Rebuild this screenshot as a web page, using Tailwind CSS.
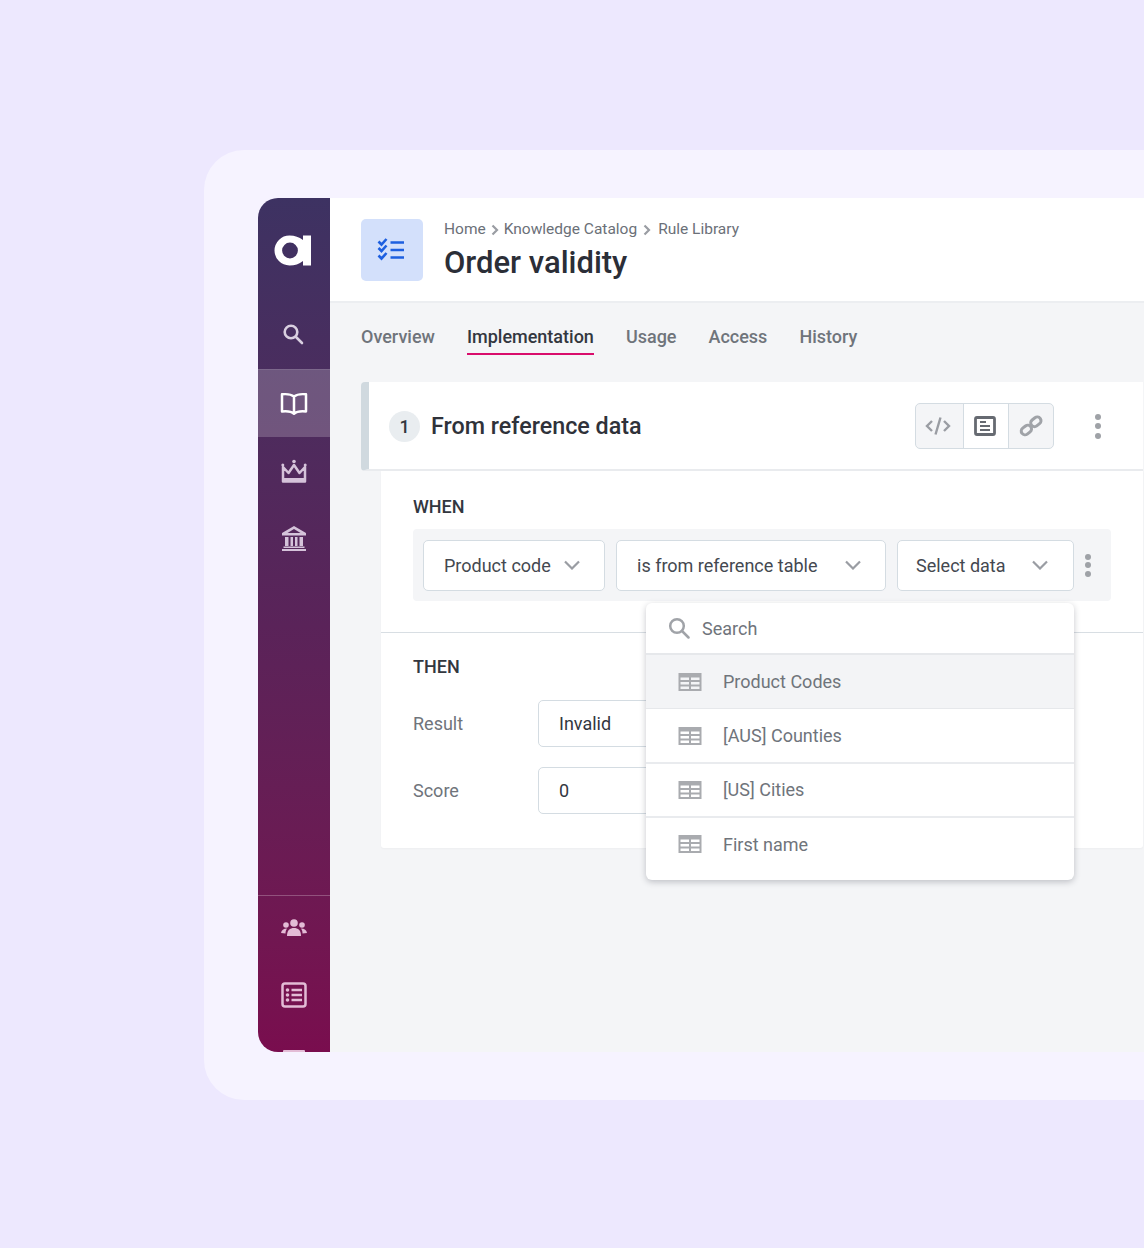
<!DOCTYPE html>
<html>
<head>
<meta charset="utf-8">
<script src="https://cdn.jsdelivr.net/npm/@tailwindcss/browser@4"></script>
</head>
<body class="bg-[#ede8fe] font-['Roboto',sans-serif]">
<div class="w-[1144px] h-[1248px] overflow-hidden pt-[150px] pl-[204px]">
  <div class="w-[940px] h-[950px] bg-[#f6f3ff] rounded-l-[40px] pt-[48px] pl-[54px]">
    <div class="flex w-[886px] h-[854px]">
      <!-- sidebar -->
      <div class="w-[72px] shrink-0 flex flex-col items-stretch rounded-l-[20px] overflow-hidden bg-gradient-to-b from-[#3d3262] via-[#5a2359] to-[#790d4e]">
        <div class="h-[103px] flex items-center justify-center pr-[3px]">
          <svg width="37" height="31" viewBox="0 0 37 31" class="mt-[1px]"><path fill="#fff" fill-rule="evenodd" d="M15.500 0.500C21 0.500 25 2 29 5V0.500H37V30.500H29V26C25 29 21 30.500 15.500 30.500A15 15 0 0 1 15.500 0.500ZM16 7.600A7.900 7.900 0 1 0 16 23.400A7.900 7.900 0 1 0 16 7.600Z"/></svg>
        </div>
        <div class="h-[68px] flex items-center justify-center pr-[2px] pb-[2px]">
          <svg width="22" height="22" viewBox="0 0 22 22" fill="none" stroke="#d9cfe0" stroke-width="2.600" stroke-linecap="round"><circle cx="9" cy="9" r="6.300"/><path d="M14 14l6 6"/></svg>
        </div>
        <div class="h-[68px] flex items-center justify-center bg-white/20 border-t border-white/10 pr-[1px]">
          <svg width="28" height="24" viewBox="0 0 28 24" fill="none" stroke="#fff" stroke-width="2.500" stroke-linejoin="round" stroke-linecap="round"><path d="M14 4.500C11.500 2.500 7 1.800 2 2.300V19.500C7 19 11.500 19.500 14 21.800C16.500 19.500 21 19 26 19.500V2.300C21 1.800 16.500 2.500 14 4.500ZM14 4.500V21"/></svg>
        </div>
        <div class="h-[68px] flex items-center justify-center pr-[1px]">
          <svg width="26" height="25" viewBox="0 0 26 25" fill="none" stroke="#d5c3da" stroke-width="2.500" stroke-linejoin="round"><path d="M2 8L7.500 14L13 6L18.500 14L24 8V22.500H2Z"/><path d="M2 20.500H24" stroke-width="3"/><circle cx="13" cy="2.500" r="1.800" fill="#d5c3da" stroke="none"/><circle cx="1.800" cy="6" r="1.500" fill="#d5c3da" stroke="none"/><circle cx="24.200" cy="6" r="1.500" fill="#d5c3da" stroke="none"/></svg>
        </div>
        <div class="h-[68px] flex items-center justify-center pr-[1px] pb-[2px]">
          <svg width="26" height="26" viewBox="0 0 26 26" fill="#d5c3da"><path fill-rule="evenodd" d="M13 1L25 8V10.500H1V8ZM13 4L6.500 8H19.500Z"/><path d="M4 12H7.500V21H4ZM9.500 12H12V21H9.500ZM14 12H16.500V21H14ZM18.500 12H22V21H18.500Z"/><path d="M2.500 21.500H23.500V23H2.500ZM1 24H25V26H1Z"/></svg>
        </div>
        <div class="flex-1"></div>
        <div class="h-[66px] flex items-center justify-center border-t border-white/25 pr-[1px] pb-[2px]">
          <svg width="26" height="18" viewBox="0 0 26 18" fill="#e3bcd6"><circle cx="13" cy="4" r="3.800"/><circle cx="5" cy="6" r="2.800"/><circle cx="21" cy="6" r="2.800"/><path d="M6 17C6 11 9 9 13 9C17 9 20 11 20 17Z"/><path d="M0 14C0.500 11 2.500 9.500 6 9.500C5 11 4.500 12.500 4.500 14.500Z"/><path d="M26 14C25.500 11 23.500 9.500 20 9.500C21 11 21.500 12.500 21.500 14.500Z"/></svg>
        </div>
        <div class="h-[68px] flex items-center justify-center shrink-0 pr-[1px]">
          <svg width="26" height="26" viewBox="0 0 26 26" fill="none" stroke="#e3bcd6" stroke-width="2.500"><rect x="1.500" y="1.500" width="23" height="23" rx="2.500"/><path d="M10.500 8H21M10.500 13H21M10.500 18H21"/><circle cx="6.500" cy="8" r="1.800" fill="#e3bcd6" stroke="none"/><circle cx="6.500" cy="13" r="1.800" fill="#e3bcd6" stroke="none"/><circle cx="6.500" cy="18" r="1.800" fill="#e3bcd6" stroke="none"/></svg>
        </div>
        <div class="h-[23px] flex justify-center items-end pr-[1px]">
          <div class="w-[22px] h-[2px] bg-[#e3bcd6] rounded-t-[1px]"></div>
        </div>
      </div>
      <!-- main -->
      <div class="flex-1 flex flex-col bg-[#f4f5f7] relative">
        <div class="h-[105px] bg-white border-b-2 border-[#eceef1] flex items-start pt-[21px] pl-[31px]">
          <div class="w-[62px] h-[62px] rounded-[5px] bg-[#d3e0fb] flex items-center justify-center pr-[2px]">
            <svg width="28" height="24" viewBox="0 0 28 24" fill="none" stroke="#1d5fe0" stroke-width="2.600"><path d="M1.500 3.500L4.500 6.500L9.500 1M1.500 10L4.500 13L9.500 7.500M1.500 17.500L4.500 20.500L9.500 15"/><path d="M13.500 4.500H27M13.500 12H27M13.500 19.500H27"/></svg>
          </div>
          <div class="ml-[21px] pt-[1px]">
            <div class="h-[20px] flex items-center text-[15.5px] text-[#6b7078]">
              <span>Home</span>
              <svg width="8" height="12" viewBox="0 0 8 12" class="mx-[5px]" fill="none" stroke="#9a9da3" stroke-width="2.200"><path d="M1.500 1.500L6 6L1.500 10.500"/></svg>
              <span>Knowledge Catalog</span>
              <svg width="8" height="12" viewBox="0 0 8 12" class="ml-[6px] mr-[7px]" fill="none" stroke="#9a9da3" stroke-width="2.200"><path d="M1.500 1.500L6 6L1.500 10.500"/></svg>
              <span>Rule Library</span>
            </div>
            <div class="text-[31px] leading-[40px] font-medium text-[#2b2e37] mt-[3px]">Order validity</div>
          </div>
        </div>
        <div class="h-[52px] mt-[5px] flex items-stretch gap-[32px] pl-[31px] text-[18px] font-medium text-[#6f747b]">
          <div class="flex items-center pt-[10px] h-[47px]">Overview</div>
          <div class="flex items-center pt-[12px] h-[47px] text-[#33373f] border-b-2 border-[#d90d6c]">Implementation</div>
          <div class="flex items-center pt-[10px] h-[47px]">Usage</div>
          <div class="flex items-center pt-[10px] h-[47px]">Access</div>
          <div class="flex items-center pt-[10px] h-[47px]">History</div>
        </div>
        <!-- card -->
        <div class="mt-[22px] ml-[31px] mr-[2px]">
          <div class="h-[89px] pt-[1px] bg-white border-l-[8px] border-[#d0d9df] rounded-l-[4px] border-b-2 border-b-[#e9ebee] flex items-center pl-[20px] pr-[42px]">
            <div class="w-[31px] h-[31px] rounded-full bg-[#e9edf0] flex items-center justify-center text-[18px] font-medium text-[#33373f]">1</div>
            <div class="ml-[11px] text-[23.3px] font-medium text-[#2f323a]">From reference data</div>
            <div class="flex-1"></div>
            <div class="flex h-[46px] w-[139px] border border-[#d4dce2] rounded-[5px] bg-[#f4f5f7] overflow-hidden mr-[41px]">
              <div class="w-[47px] flex items-center justify-center pr-[4px]">
                <svg width="26" height="20" viewBox="0 0 26 20" fill="none" stroke="#9a9da3" stroke-width="2.400"><path d="M7 5L2 10L7 15M19 5L24 10L19 15M15.500 1.500L10.500 18.500"/></svg>
              </div>
              <div class="w-[46px] bg-white border-x border-[#d4dce2] flex items-center justify-center pr-[2px]">
                <svg width="22" height="20" viewBox="0 0 22 20" fill="none" stroke="#666a71" stroke-width="2.800"><rect x="1.500" y="1.500" width="19" height="17" rx="1.500"/><path d="M6 6H12M6 10H16M6 14H16" stroke-width="2"/></svg>
              </div>
              <div class="flex-1 flex items-center justify-center">
                <svg width="24" height="24" viewBox="0 0 24 24" fill="none" stroke="#a0a3a8" stroke-width="3"><rect x="1.800" y="12.500" width="11" height="7.500" rx="3.700" transform="rotate(-38 7 16)"/><rect x="11.500" y="4" width="11" height="7.500" rx="3.700" transform="rotate(-38 17 8)"/></svg>
              </div>
            </div>
            <div class="flex flex-col gap-[3.500px] w-[6px]">
              <div class="w-[6px] h-[6px] rounded-full bg-[#9fa2a7]"></div>
              <div class="w-[6px] h-[6px] rounded-full bg-[#9fa2a7]"></div>
              <div class="w-[6px] h-[6px] rounded-full bg-[#9fa2a7]"></div>
            </div>
          </div>
          <div class="ml-[20px] h-[377px] bg-white rounded-b-[3px] shadow-[0_1px_2px_rgba(0,0,0,0.03)]">
            <div class="h-[162px] border-b border-[#d8dee3] px-[32px] pt-[25px]">
              <div class="text-[18px] leading-[22px] font-medium text-[#33373f]">WHEN</div>
              <div class="mt-[11px] w-[698px] h-[72px] bg-[#f4f5f7] rounded-[4px] flex items-center pl-[10px] text-[18px] text-[#444850]">
                <div class="w-[182px] h-[51px] bg-white border border-[#d4dce2] rounded-[5px] flex items-center justify-between pl-[20px] pr-[24px]">Product code
                  <svg width="16" height="10" viewBox="0 0 16 10" fill="none" stroke="#9a9da3" stroke-width="2.200"><path d="M1 1.500L8 8.500L15 1.500"/></svg>
                </div>
                <div class="w-[270px] h-[51px] ml-[11px] bg-white border border-[#d4dce2] rounded-[5px] flex items-center justify-between pl-[20px] pr-[24px]">is from reference table
                  <svg width="16" height="10" viewBox="0 0 16 10" fill="none" stroke="#9a9da3" stroke-width="2.200"><path d="M1 1.500L8 8.500L15 1.500"/></svg>
                </div>
                <div class="w-[177px] h-[51px] ml-[11px] bg-white border border-[#d4dce2] rounded-[5px] flex items-center justify-between pl-[18px] pr-[25px]">Select data
                  <svg width="16" height="10" viewBox="0 0 16 10" fill="none" stroke="#9a9da3" stroke-width="2.200"><path d="M1 1.500L8 8.500L15 1.500"/></svg>
                </div>
                <div class="ml-[11px] flex flex-col gap-[2.500px] w-[6px]">
                  <div class="w-[6px] h-[6px] rounded-full bg-[#9fa2a7]"></div>
                  <div class="w-[6px] h-[6px] rounded-full bg-[#9fa2a7]"></div>
                  <div class="w-[6px] h-[6px] rounded-full bg-[#9fa2a7]"></div>
                </div>
              </div>
            </div>
            <div class="px-[32px] pt-[23px] text-[18px]">
              <div class="leading-[22px] font-medium text-[#33373f]">THEN</div>
              <div class="mt-[22px] flex items-center text-[#6f747b]">
                <div class="w-[125px]">Result</div>
                <div class="w-[200px] h-[47px] bg-white border border-[#d4dce2] rounded-[5px] flex items-center pl-[20px] text-[#33373f]">Invalid</div>
              </div>
              <div class="mt-[20px] flex items-center text-[#6f747b]">
                <div class="w-[125px]">Score</div>
                <div class="w-[200px] h-[47px] bg-white border border-[#d4dce2] rounded-[5px] flex items-center pl-[20px] text-[#33373f]">0</div>
              </div>
            </div>
          </div>
        </div>
        <!-- dropdown -->
        <div class="absolute left-[316px] top-[405px] w-[428px] h-[277px] bg-white rounded-[6px] shadow-[0_2px_6px_rgba(30,35,50,0.25)] text-[18px] text-[#6f747b] overflow-hidden">
          <div class="h-[50px] flex items-center pl-[22px]">
            <svg width="22" height="22" viewBox="0 0 22 22" fill="none" stroke="#a0a3a8" stroke-width="2.500" stroke-linecap="round"><circle cx="9" cy="9" r="6.800"/><path d="M14 14l6.500 6.500"/></svg>
            <span class="ml-[12px]">Search</span>
          </div>
          <div class="h-[56px] flex items-center pl-[32px] bg-[#f3f4f6] border-t-2 border-b border-[#e6e8eb]">
            <svg width="24" height="18" viewBox="0 0 24 18" fill="#a9abaf"><path fill-rule="evenodd" d="M0.500 0H23.500V18H0.500ZM2.500 4.500V7H11V4.500ZM13 4.500V7H21.500V4.500ZM2.500 9V11.500H11V9ZM13 9V11.500H21.500V9ZM2.500 13.500V16H11V13.500ZM13 13.500V16H21.500V13.500Z"/></svg>
            <span class="ml-[21px]">Product Codes</span>
          </div>
          <div class="h-[55px] flex items-center pl-[32px] border-b-2 border-[#e9ebee]">
            <svg width="24" height="18" viewBox="0 0 24 18" fill="#a9abaf"><path fill-rule="evenodd" d="M0.500 0H23.500V18H0.500ZM2.500 4.500V7H11V4.500ZM13 4.500V7H21.500V4.500ZM2.500 9V11.500H11V9ZM13 9V11.500H21.500V9ZM2.500 13.500V16H11V13.500ZM13 13.500V16H21.500V13.500Z"/></svg>
            <span class="ml-[21px]">[AUS] Counties</span>
          </div>
          <div class="h-[54px] flex items-center pl-[32px] pb-[1px] border-b-2 border-[#e9ebee]">
            <svg width="24" height="18" viewBox="0 0 24 18" fill="#a9abaf"><path fill-rule="evenodd" d="M0.500 0H23.500V18H0.500ZM2.500 4.500V7H11V4.500ZM13 4.500V7H21.500V4.500ZM2.500 9V11.500H11V9ZM13 9V11.500H21.500V9ZM2.500 13.500V16H11V13.500ZM13 13.500V16H21.500V13.500Z"/></svg>
            <span class="ml-[21px]">[US] Cities</span>
          </div>
          <div class="h-[52px] flex items-center pl-[32px]">
            <svg width="24" height="18" viewBox="0 0 24 18" fill="#a9abaf"><path fill-rule="evenodd" d="M0.500 0H23.500V18H0.500ZM2.500 4.500V7H11V4.500ZM13 4.500V7H21.500V4.500ZM2.500 9V11.500H11V9ZM13 9V11.500H21.500V9ZM2.500 13.500V16H11V13.500ZM13 13.500V16H21.500V13.500Z"/></svg>
            <span class="ml-[21px]">First name</span>
          </div>
        </div>
      </div>
    </div>
  </div>
</div>
</body>
</html>
